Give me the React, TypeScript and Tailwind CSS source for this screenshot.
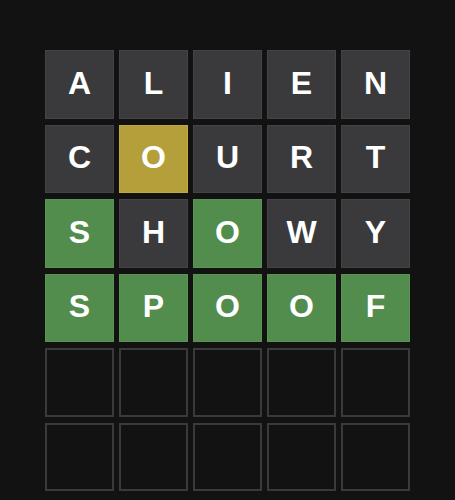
import React from "react";

type S = "a" | "p" | "c" | "e";
const rows: { l: string; s: S }[][] = [
  [..."ALIEN"].map((l) => ({ l, s: "a" as S })),
  [
    { l: "C", s: "a" },
    { l: "O", s: "p" },
    { l: "U", s: "a" },
    { l: "R", s: "a" },
    { l: "T", s: "a" },
  ],
  [
    { l: "S", s: "c" },
    { l: "H", s: "a" },
    { l: "O", s: "c" },
    { l: "W", s: "a" },
    { l: "Y", s: "a" },
  ],
  [..."SPOOF"].map((l) => ({ l, s: "c" as S })),
  [..."     "].map(() => ({ l: "", s: "e" as S })),
  [..."     "].map(() => ({ l: "", s: "e" as S })),
];

const cls: Record<S, string> = {
  a: "bg-[#3a3a3c] border border-[#444446]",
  p: "bg-[#b59f3b] border border-[#bfa945]",
  c: "bg-[#538d4e] border border-[#5a9455]",
  e: "border-2 border-[#3a3a3c]",
};

export default function App() {
  return (
    <div className="w-[455px] h-[500px] bg-[#121213] pt-[50px] pl-[45px]" style={{ fontFamily: '"Liberation Sans", Arial, sans-serif' }}>
      <div className="grid grid-cols-[repeat(5,69px)] gap-x-[5px] gap-y-[6px]">
        {rows.flat().map((t, i) => (
          <div
            key={i}
            className={`h-[68.5px] flex items-center justify-center text-[32px] font-bold text-white leading-none pb-[3px] ${cls[t.s]}`}
          >
            {t.l}
          </div>
        ))}
      </div>
    </div>
  );
}
